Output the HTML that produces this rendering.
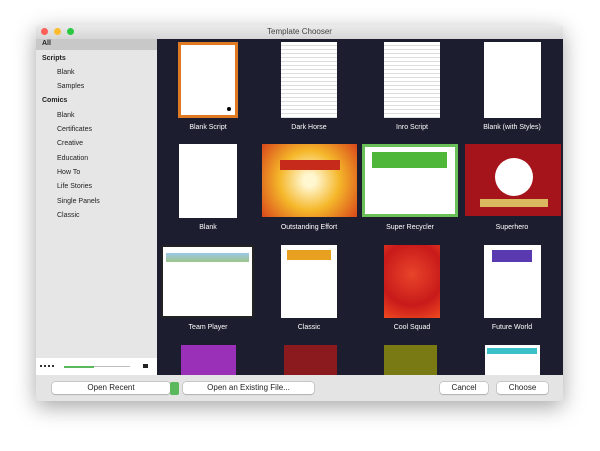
<!DOCTYPE html><html><head><style>
body{margin:0;width:600px;height:451px;background:#fff;position:relative;overflow:hidden;font-family:"Liberation Sans",sans-serif}
.a{position:absolute}
.win{left:36px;top:25px;width:527px;height:376px;background:#ececec;box-shadow:0 6px 22px rgba(0,0,0,.35);border-radius:4px;overflow:hidden}
.side{font-size:7px;color:#222}
.lab{position:absolute;font-size:7px;color:#fff;text-align:center;width:110px}
.pg{position:absolute;background:#fff}
.btn{position:absolute;background:#fff;border-radius:3px;box-shadow:0 0 0 .5px #aaa,0 1px 1px rgba(0,0,0,.2);font-size:8px;text-align:center;line-height:12px;color:#222}
</style></head><body>
<div class="a win">
 <div class="a" style="left:0;top:0;width:527px;height:14px;background:linear-gradient(#ebebeb,#d6d6d6)"></div>
 <div class="a" style="left:5px;top:3px;width:7px;height:7px;border-radius:50%;background:#fc5f57"></div>
 <div class="a" style="left:18px;top:3px;width:7px;height:7px;border-radius:50%;background:#fdbc2e"></div>
 <div class="a" style="left:31px;top:3px;width:7px;height:7px;border-radius:50%;background:#29c840"></div>
 <div class="a" style="left:0;top:2px;width:527px;text-align:center;font-size:8px;color:#444">Template Chooser</div>
 <div class="a" style="left:0;top:14px;width:121px;height:336px;background:#e6e6e6"></div>
 <div class="a" style="left:0;top:14px;width:121px;height:11px;background:#c8c8c8"></div>
 <div class="a side" style="left:6px;top:15px;font-weight:bold">All</div>
 <div class="a side" style="left:6px;top:30px;font-weight:bold">Scripts</div>
 <div class="a side" style="left:21px;top:44px">Blank</div>
 <div class="a side" style="left:21px;top:58px">Samples</div>
 <div class="a side" style="left:6px;top:72px;font-weight:bold">Comics</div>
 <div class="a side" style="left:21px;top:87px">Blank</div>
 <div class="a side" style="left:21px;top:101px">Certificates</div>
 <div class="a side" style="left:21px;top:115px">Creative</div>
 <div class="a side" style="left:21px;top:130px">Education</div>
 <div class="a side" style="left:21px;top:144px">How To</div>
 <div class="a side" style="left:21px;top:158px">Life Stories</div>
 <div class="a side" style="left:21px;top:173px">Single Panels</div>
 <div class="a side" style="left:21px;top:187px">Classic</div>
 <div class="a" style="left:0;top:333px;width:121px;height:17px;background:#fff"></div>
 <div class="a" style="left:4px;top:340px;width:14px;height:2px;border-top:2px dotted #333"></div>
 <div class="a" style="left:28px;top:341px;width:30px;height:2px;background:#5cb85c"></div>
 <div class="a" style="left:58px;top:341px;width:36px;height:1px;background:#bbb"></div>
 <div class="a" style="left:107px;top:339px;width:5px;height:4px;background:#222"></div>
 <div class="a" style="left:121px;top:14px;width:406px;height:336px;background:#1c1d2e"></div>
 <div class="a" style="left:0;top:350px;width:527px;height:26px;background:#e4e4e4"></div>
</div>
<!-- row1 -->
<div class="pg" style="left:178px;top:42px;width:60px;height:76px;box-shadow:inset 0 0 0 3px #e07a22"></div>
<div class="a" style="left:227px;top:107px;width:4px;height:4px;border-radius:50%;background:#000"></div>
<div class="pg" style="left:281px;top:42px;width:56px;height:76px;background:repeating-linear-gradient(#fff 0 3px,#ddd 3px 4px)"></div>
<div class="pg" style="left:384px;top:42px;width:56px;height:76px;background:repeating-linear-gradient(#fff 0 3px,#ddd 3px 4px)"></div>
<div class="pg" style="left:484px;top:42px;width:57px;height:76px"></div>
<div class="lab" style="left:153px;top:124px">Blank Script</div>
<div class="lab" style="left:254px;top:124px">Dark Horse</div>
<div class="lab" style="left:357px;top:124px">Inro Script</div>
<div class="lab" style="left:457px;top:124px">Blank (with Styles)</div>
<!-- row2 -->
<div class="pg" style="left:179px;top:144px;width:58px;height:74px"></div>
<div class="pg" style="left:262px;top:144px;width:95px;height:73px;background:radial-gradient(circle,#fff7d0 10%,#f5b72a 50%,#d8461a 100%)"></div>
<div class="a" style="left:280px;top:160px;width:60px;height:10px;background:#c62a1a"></div>
<div class="pg" style="left:362px;top:144px;width:96px;height:73px;box-shadow:inset 0 0 0 3px #6bbf59"></div>
<div class="a" style="left:372px;top:152px;width:75px;height:16px;background:#4fb83a"></div>
<div class="pg" style="left:465px;top:144px;width:96px;height:72px;background:#a5141a"></div>
<div class="a" style="left:495px;top:158px;width:38px;height:38px;border-radius:50%;background:#fff"></div>
<div class="a" style="left:480px;top:199px;width:68px;height:8px;background:#d9b860"></div>
<div class="lab" style="left:153px;top:224px">Blank</div>
<div class="lab" style="left:254px;top:224px">Outstanding Effort</div>
<div class="lab" style="left:355px;top:224px">Super Recycler</div>
<div class="lab" style="left:457px;top:224px">Superhero</div>
<!-- row3 -->
<div class="pg" style="left:161px;top:245px;width:93px;height:73px;box-shadow:inset 0 0 0 2px #222"></div>
<div class="a" style="left:166px;top:253px;width:83px;height:9px;background:linear-gradient(#9cc8e8,#9fc58a)"></div>
<div class="pg" style="left:281px;top:245px;width:56px;height:73px"></div>
<div class="a" style="left:287px;top:250px;width:44px;height:10px;background:#e8a020"></div>
<div class="pg" style="left:384px;top:245px;width:56px;height:73px;background:radial-gradient(circle at 50% 40%,#e8442a,#c81a1a 60%,#f04a20)"></div>
<div class="pg" style="left:484px;top:245px;width:57px;height:73px"></div>
<div class="a" style="left:492px;top:250px;width:40px;height:12px;background:#5a3ab0"></div>
<div class="lab" style="left:153px;top:324px">Team Player</div>
<div class="lab" style="left:254px;top:324px">Classic</div>
<div class="lab" style="left:357px;top:324px">Cool Squad</div>
<div class="lab" style="left:457px;top:324px">Future World</div>
<!-- row4 -->
<div class="pg" style="left:181px;top:345px;width:55px;height:30px;background:#9a2fb8"></div>
<div class="pg" style="left:284px;top:345px;width:53px;height:30px;background:#8a1a1e"></div>
<div class="pg" style="left:384px;top:345px;width:53px;height:30px;background:#7a7a14"></div>
<div class="pg" style="left:485px;top:345px;width:55px;height:30px"></div>
<div class="a" style="left:487px;top:348px;width:50px;height:6px;background:#3cc0c8"></div>
<!-- buttons -->
<div class="btn" style="left:52px;top:382px;width:118px">Open Recent</div>
<div class="a" style="left:170px;top:382px;width:9px;height:13px;background:#5cb85c;border-radius:2px"></div>
<div class="btn" style="left:183px;top:382px;width:131px">Open an Existing File...</div>
<div class="btn" style="left:440px;top:382px;width:48px">Cancel</div>
<div class="btn" style="left:497px;top:382px;width:51px">Choose</div>
</body></html>
